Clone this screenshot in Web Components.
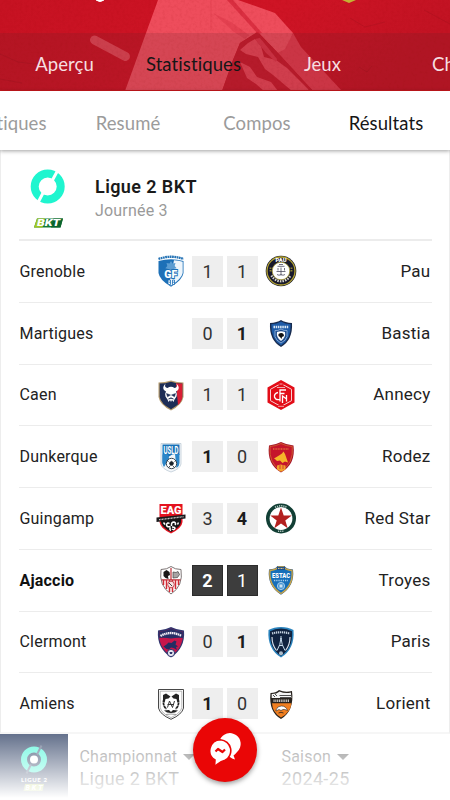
<!DOCTYPE html>
<html lang="fr">
<head>
<meta charset="utf-8">
<meta name="viewport" content="width=device-width, initial-scale=1">
<title>Résultats - Ligue 2 BKT</title>
<style>
    html, body {
        margin: 0;
        height: 100%;
        overflow: hidden;
        background: #fff;
        font-family: Roboto, "Liberation Sans", sans-serif;
    }
</style>
</head>
<body>
<results-screen>
    <club-header slot="header">
        <tab-item light>Aperçu</tab-item>
        <tab-item active>Statistiques</tab-item>
        <tab-item light>Jeux</tab-item>
        <tab-item light>Chat</tab-item>
    </club-header>
    <sub-tabs slot="tabs">
        <tab-item>Statistiques</tab-item>
        <tab-item>Resumé</tab-item>
        <tab-item>Compos</tab-item>
        <tab-item active>Résultats</tab-item>
    </sub-tabs>
    <league-title slot="content" name="Ligue 2 BKT" day="Journée 3"></league-title>
    <match-row slot="content" home="Grenoble" away="Pau" score="1-1"></match-row>
    <match-row slot="content" home="Martigues" away="Bastia" score="0-1"></match-row>
    <match-row slot="content" home="Caen" away="Annecy" score="1-1"></match-row>
    <match-row slot="content" home="Dunkerque" away="Rodez" score="1-0"></match-row>
    <match-row slot="content" home="Guingamp" away="Red Star" score="3-4"></match-row>
    <match-row slot="content" home="Ajaccio" away="Troyes" score="2-1" own></match-row>
    <match-row slot="content" home="Clermont" away="Paris" score="0-1"></match-row>
    <match-row slot="content" home="Amiens" away="Lorient" score="1-0"></match-row>
    <filter-bar slot="footer"></filter-bar>
    <chat-button slot="fab"></chat-button>
</results-screen>

<script>
// Crests, all drawn in a 32x32 box
const CRESTS = {
    'Grenoble': `
        <path d="M3.500 4Q16 -.5 28.500 4" fill="none" stroke="#2573b5" stroke-width="2.300" stroke-dasharray="1.800 .5"/>
        <path d="M3.500 6Q16 2.500 28.500 6V18Q27.500 25 16 31.700Q4.500 25 3.500 18Z" fill="#1d70b7"/>
        <path d="M19 5.200Q24 5.500 27.700 6.800V18Q26.500 24 16 30.500L14 29Z" fill="#eef5fb"/>
        <path d="M16 6l1.500 2.500 3-.5-.8 3 2 2.200-3 .8L16 17l-2.700-3-3-.8 2-2.200-.8-3 3 .5z" fill="#5c9dd2"/>
        <text x="15.700" y="23" font-size="10.500" font-weight="900" fill="#fff" stroke="#1d70b7" stroke-width="1.800" paint-order="stroke" text-anchor="middle">GF</text>
        <path d="M13.500 25h2v4.500h-2M14 27.200h1.500M17.500 25h2v4.500h-2zM17.500 27.200h2" stroke="#1d70b7" fill="#fff" stroke-width=".8"/>`,
    'Pau': `
        <circle cx="16" cy="16" r="15.300" fill="#17182b"/>
        <circle cx="16" cy="16" r="14" fill="none" stroke="#b5a532" stroke-width="1.300"/>
        <path d="M6.500 20.500A10.700 10.700 0 0 0 25.500 20.500" fill="none" stroke="#d8d6cc" stroke-width="2.300" stroke-dasharray="1.500 1.100"/>
        <path d="M5.500 12.500v5M26.500 12.500v5" stroke="#8d8332" stroke-width="1.800" stroke-dasharray="1.500 1"/>
        <circle cx="16" cy="16" r="8.800" fill="#fff" stroke="#a99c36" stroke-width=".8"/>
        <text x="16" y="7" font-size="5" font-weight="900" fill="#fff" textLength="11" lengthAdjust="spacingAndGlyphs" text-anchor="middle">PAU</text>
        <path d="M12.500 11.300h7M14 9.500h4M11.500 16.500h9M13 13v2.500M16 12.500v8M19.500 13v2.500M12 19.500q2 1.500 4 0q2 1.500 4 0" stroke="#4b4b5e" stroke-width=".8" fill="none"/>`,
    'Bastia': `
        <path d="M5 6Q12 5.500 16 3Q20 5.500 27 6Q28 23 16 30Q4 23 5 6Z" fill="#182b4e"/>
        <path d="M6.300 7.300Q12 7 16 4.600Q20 7 25.700 7.300Q26.200 22.300 16 28.600Q5.800 22.300 6.300 7.300Z" fill="#1d5aa6"/>
        <path d="M8.500 10h15" stroke="#d9e7f5" stroke-width="2.400" stroke-dasharray="1.500 .7"/>
        <path d="M10 13.500q3 .5 6-1.500q3 2 6 1.500v6q-1 4-6 6.500q-5-2.500-6-6.500z" fill="#1d4b8c" stroke="#9dbbe0" stroke-width=".8"/>
        <path d="M12 15q4-1.500 8 0q1 5.500-4 9q-5-3.500-4-9z" fill="#fff"/>
        <path d="M13.500 17q3-2 5 0l.5 2-2 1-.5 2-1.500-2-1.500-1z" fill="#111"/>`,
    'Caen': `
        <path d="M3.500 3.500Q10 3.500 16 1.500Q22 3.500 28.500 3.500V18Q27 26 16 31.500Q5 26 3.500 18Z" fill="#b49a6c"/>
        <path d="M4.700 4.600Q10 4.500 16 2.700Q22 4.500 27.300 4.600V18Q26 25 16 30.200Q6 25 4.700 18Z" fill="#1d2d56"/>
        <path d="M21 4.200Q24 4.600 27.300 4.600V18Q26.800 22.500 23 26Z" fill="#d81e34"/>
        <path d="M10.500 4.500Q5.500 10 11 12.500Q9.500 15 10.500 17.500L12.500 20.500L13.500 23L15 21L16 23L17 21L18.500 23L19.500 20.500L21.500 17.500Q22.500 15 21 12.500Q26.500 10 21.500 4.500Q23 8.500 19.500 9Q16 6.500 12.500 9Q9 8.500 10.500 4.500Z" fill="#fff"/>
        <path d="M11.500 14.500l4 1.500-3 1.800zM20.500 14.500l-4 1.500 3 1.800zM13.500 20q2.500-2.500 5 0q-2.500-1-5 0" fill="#1d2d56" stroke="#1d2d56" stroke-width=".5"/>`,
    'Annecy': `
        <path d="M16 1L29.500 8.500V23.500L16 31L2.500 23.500V8.500Z" fill="#e30d18"/>
        <path d="M16 4.500L26.500 10.300V21.700L16 27.500L5.500 21.700V10.300Z" fill="none" stroke="#f7d2d3" stroke-width="1"/>
        <path d="M13.500 3h5v3h-5zM13 26h6v3h-6z" fill="#e30d18"/>
        <path d="M14.500 5h3M12 8.500h8M13 27.300h6" stroke="#f6b8bb" stroke-width=".9"/>
        <path d="M15 22.500V11H21M15 14.500H19.500M13 13.500Q9 14.500 9.500 18Q10.500 21.300 14.500 20.500M17.500 24V17L21.500 20V16V22.500" stroke="#fff" stroke-width="1.300" fill="none"/>`,
    'Dunkerque': `
        <path d="M6 2.500H26V23Q25 28 16 31Q7 28 6 23Z" fill="#f4f7fa" stroke="#b7c5d1" stroke-width=".7"/>
        <path d="M7.500 3.500H24.500V14Q16 10 7.500 23Z" fill="#1872b8"/>
        <path d="M7.500 13.500Q14 11 14 18L9 26Q7.500 24 7.500 21ZM20 13h4.500v9q0 3-3 5z" fill="#2c86c9"/>
        <text x="16" y="12.500" font-size="10" font-weight="700" fill="#fff" textLength="15" lengthAdjust="spacingAndGlyphs" text-anchor="middle">USLD</text>
        <circle cx="16.500" cy="22.500" r="5.200" fill="#fff" stroke="#26343f" stroke-width=".9"/>
        <path d="M16.500 20.300l2 1.500-.8 2.400h-2.400l-.8-2.400zM12 19.500l1.500 1M21 19.500l-1.500 1M14 26.500l.8-1.500M19 26.500l-.8-1.500" fill="#19222a" stroke="#19222a" stroke-width=".8"/>`,
    'Rodez': `
        <path d="M4 4.500Q10 4 16 1Q22 4 28.500 4.500Q31 23 16 31.500Q1.500 23 4 4.500Z" fill="#a5122a"/>
        <path d="M5 5.500Q11 5 16 2.500Q21 5 27.300 5.500Q29 22.500 16 30Q3.500 22.500 5 5.500Z" fill="#c5152b" stroke="#df8a32" stroke-width=".6"/>
        <path d="M8 8h16" stroke="#df6b3a" stroke-width="1.300" stroke-dasharray="1 .6"/>
        <path d="M9 17.500L14 14.500L17 12.500L18.500 10.500L20 13L23 21.500L20 20.500L17.500 22L15 19.500L12 20L10.500 18.500Z" fill="#f6b52a"/>
        <path d="M12 24.500L15.500 23.500L20.500 24.500V28.500L16 30.800L12 28.500Z" fill="#f2a32c"/>
        <path d="M15 24v4M18 24v4" stroke="#c5152b" stroke-width=".7"/>`,
    'Guingamp': `
        <path d="M4.500 2H27.500V20Q27 26 16 31.500Q5 26 4.500 20Z" fill="#e4121f"/>
        <path d="M6 15H26V20Q25.500 25 16 30Q6.500 25 6 20Z" fill="#171517"/>
        <text x="16" y="12.300" font-size="11" font-weight="900" fill="#fff" textLength="21" lengthAdjust="spacingAndGlyphs" text-anchor="middle">EAG</text>
        <path d="M1.500 15.500L30.500 12.500V16.500L1.500 20Z" fill="#1b181a"/>
        <path d="M4 17.700L28.500 14.700" stroke="#c9c9c9" stroke-width="1.300" stroke-dasharray="1 .5"/>
        <path d="M15.500 24.500q-4 1-4-2q1-2.500 3-1M16.500 24q-.5-4 2.500-4q2.500 1 1 3M17 25q3 0 3 1.500q-1 2-3 .5M15.500 25.500q-1.500 2 .5 3M8.500 20.500l1.500 2M23.500 20.500l-1 2" fill="none" stroke="#fff" stroke-width="1.500"/>`,
    'Red Star': `
        <circle cx="16" cy="16.500" r="15" fill="#123f35"/>
        <path d="M10 5.300A12.900 12.900 0 0 1 22 5.300M13 29.200h6" fill="none" stroke="#b3c6c0" stroke-width="1.600" stroke-dasharray="1.200 .9"/>
        <circle cx="16" cy="16.500" r="11.400" fill="#fff"/>
        <path d="M16 5.500L18.700 13.500H26.800L20.300 18.400L22.700 26.200L16 21.500L9.300 26.200L11.700 18.400L5.200 13.500H13.300Z" fill="#b3201f"/>`,
    'Ajaccio': `
        <path d="M6 5.500Q12 5.500 16 2.500Q20 5.500 26 5.500Q28.500 22 16 30Q3.500 22 6 5.500Z" fill="#fff" stroke="#6f6767" stroke-width=".9"/>
        <path d="M8.500 16v5M11.500 16v9M14.500 16v12M17.500 16v12M20.500 16v9M23.500 16v5" stroke="#d22b34" stroke-width="1.500"/>
        <path d="M6.500 15.800H25.500M16 4V16" stroke="#bf3038" stroke-width="1.200"/>
        <path d="M8.500 8l3-2 3 2 .5 3-2 1 .5 3-3-1-2-2z" fill="#191717"/>
        <path d="M18 8l3 .5 2-1 1.500 3-2 3-4.500 .5z" fill="#a8a4a4" stroke="#444" stroke-width=".7"/>
        <circle cx="16" cy="20.500" r="3.300" fill="#f9e4e4" stroke="#b72a35" stroke-width=".8"/><path d="M14 19l3 3" stroke="#444"/>`,
    'Troyes': `
        <path d="M4 5.500Q11 5 12.500 2H19.500Q21 5 28 5.500Q30 22 16 30.700Q2 22 4 5.500Z" fill="#1d4c86"/>
        <path d="M5 6.500Q11 6 13.500 3H18.500Q21 6 27 6.500Q28.700 21.500 16 29.500Q3.300 21.500 5 6.500Z" fill="#176fb9" stroke="#c9a548" stroke-width="1.400"/>
        <path d="M12 4.500h8" stroke="#1d4c86" stroke-width="2.800"/>
        <path d="M13 4.500h6" stroke="#d5c28b" stroke-width="1" stroke-dasharray="1 .5"/>
        <text x="16" y="13.500" font-size="6.500" font-weight="900" fill="#fff" textLength="18" text-anchor="middle" lengthAdjust="spacingAndGlyphs">ESTAC</text>
        <path d="M9 16.500h14" stroke="#a7cde9" stroke-width="1.500" stroke-dasharray="1.300 .9"/>
        <circle cx="16" cy="22" r="3.600" fill="#4895d1" stroke="#b4d5ee" stroke-width=".9"/>
        <path d="M14.500 20.500h3v3h-3z" fill="#cfe4f4"/>`,
    'Clermont': `
        <path d="M3 4.500Q10 4 16 1Q22 4 29 4.500Q30.500 22 16 31.500Q1.500 22 3 4.500Z" fill="#30366f"/>
        <path d="M4.200 5.500Q11 5 16 2.500Q21 5 27.800 5.500Q29 21.500 16 30Q3 21.500 4.200 5.500Z" fill="#c6164b"/>
        <path d="M4.200 5.500Q11 5 16 2.500Q21 5 27.800 5.500L27.900 12Q22 11.500 16 12.500Q10 11.500 4.200 12Z" fill="#272f66"/>
        <path d="M5.500 10Q16 4 26.500 10" fill="none" stroke="#f3eef5" stroke-width="2.300" stroke-dasharray="1.500 .5"/>
        <path d="M8.500 20.500l3-2 2-2 3 .5 3-2.500 2 1-1 3 2.500 2-2 .5 1 3-3.500-2-2.500-.5-2 2-2.500-.5z" fill="#222d63"/>
        <circle cx="16" cy="27" r="3.600" fill="#e8e8ef" stroke="#30366f"/><path d="M14.500 26h3l-.5 2h-2z" fill="#30366f"/>`,
    'Paris': `
        <path d="M3.500 4Q9 1 16 1Q23 1 28.500 4Q30 23 16 31.500Q2 23 3.500 4Z" fill="#2a83bd"/>
        <path d="M5 5.200Q10 2.500 16 2.500Q22 2.500 27 5.200Q28.200 22 16 29.800Q3.800 22 5 5.200Z" fill="#10223f"/>
        <path d="M7 7.500Q16 5 25 7.500" fill="none" stroke="#c3d0de" stroke-width="2.200" stroke-dasharray="1.300 .7"/>
        <path d="M7 11Q7 19 11.500 24.500M25 11Q25 19 20.500 24.500" fill="none" stroke="#dbe5f0" stroke-width="1.100"/>
        <path d="M16 10V13M16 12Q15.500 19 12 24.500M16 12Q16.500 19 20 24.500M14 19.500h4" fill="none" stroke="#c8dced" stroke-width="1"/>
        <circle cx="16" cy="27.300" r="2" fill="#aebcc9"/>`,
    'Amiens': `
        <path d="M3.500 1.500H28.500V20Q27 26.500 16 31.300Q5 26.500 3.500 20Z" fill="#fff" stroke="#333" stroke-width=".9"/>
        <path d="M5.200 3.200H26.800V19.500Q25.500 25.500 16 29.600Q6.500 25.500 5.200 19.500Z" fill="none" stroke="#777" stroke-width=".5"/>
        <path d="M8 7l3-1.500 3 2 1.500 1-2 2-3 .5-1 4-1.500-4zM24 7l-3-1.500-3 2-1.500 1 2 2 3 .5 1 4 1.500-4z" fill="#242424"/>
        <path d="M9 11q-2 6 2.500 10M23 11q2 6-2.500 10" stroke="#222" stroke-width="1.700" stroke-dasharray="3 .5" fill="none"/>
        <path d="M12.500 19.500L14.500 13L17.500 19.500L19.500 13M12.500 16.500l6.500 0" stroke="#333" stroke-width="1" fill="none"/>
        <path d="M9 22.500l5-.5 2 2 2-2 5 .5-3 2-4 .5-4-.5z" fill="#222"/>
        <path d="M11 26.500Q16 25.500 21 26.500" fill="none" stroke="#999"/>`,
    'Lorient': `
        <path d="M5.500 5Q11 5 14 2Q20 5 27 3Q29.500 23 16 31Q3.500 24 5.500 5Z" fill="#27221d"/>
        <path d="M6.700 6Q12 6 14.500 3.500Q20 6 25.900 4.500L26.400 10H6.700Z" fill="#f4f4f4"/>
        <path d="M8 7l2 2M10 6l2 2M14.500 7.500H26M15 9.500h11" stroke="#222" stroke-width=".8"/>
        <path d="M7 15.200H26.500Q25.500 24.500 16 29.500Q7.500 24.500 7 15.200Z" fill="#f07f21"/>
        <path d="M8.500 12.800h15.500" stroke="#c9c6c2" stroke-width="2.400" stroke-dasharray="1.100 .7"/>
        <path d="M11 22q1-4 5.500-4q4.500 0 6 4.500q-3-1.500-4.500-1l-2 1-2-1-3 1.500z" fill="#fff" stroke="#27221d" stroke-width=".6"/>
        <path d="M13.500 25q2.500-1.500 5 0" stroke="#27221d" stroke-width=".8" fill="none"/>`
};

class ResultsScreen extends HTMLElement {
    constructor() {
        super();
        this.attachShadow({ mode: 'open' }).innerHTML = `
            <style>
                :host {
                    display: flex;
                    flex-direction: column;
                    position: relative;
                    width: 450px;
                    height: 800px;
                    overflow: hidden;
                    background: #fff;
                }
                .card {
                    flex: none;
                    box-sizing: border-box;
                    height: 584px;
                    padding: 0 17.500px;
                    border: 1px solid #ededed;
                    border-top: 0;
                    border-bottom: 2px solid #f6f6f6;
                    overflow: hidden;
                }
            </style>
            <slot name="header"></slot>
            <slot name="tabs"></slot>
            <main class="card"><slot name="content"></slot></main>
            <slot name="footer"></slot>
            <slot name="fab"></slot>
        `;
    }
}

class TabItem extends HTMLElement {
    constructor() {
        super();
        this.attachShadow({ mode: 'open' }).innerHTML = `
            <style>
                :host {
                    flex: none;
                    width: 129px;
                    text-align: center;
                    font: 18.500px/24px Lato, "Open Sans", sans-serif;
                    font-variant-ligatures: none;
                    letter-spacing: .1px;
                    color: #9b9b9b;
                }
                :host([light]) { color: #f6dfe1; }
                :host([active]) { color: #161616; }
            </style>
            <slot></slot>
        `;
    }
}

class ClubHeader extends HTMLElement {
    constructor() {
        super();
        this.attachShadow({ mode: 'open' }).innerHTML = `
            <style>
                :host {
                    display: grid;
                    flex: none;
                    height: 91px;
                    overflow: hidden;
                    background: #c71424;
                }
                svg, nav { grid-area: 1 / 1; }
                svg { display: block; }
                nav {
                    display: flex;
                    align-items: center;
                    align-self: end;
                    box-sizing: border-box;
                    width: 450px;
                    height: 58px;
                    padding-top: 4px;
                    overflow: hidden;
                    background: rgba(85, 40, 45, .16);
                    border-bottom: 1px solid #c9171c;
                }
            </style>
            <svg width="450" height="91" viewBox="0 0 450 91" aria-hidden="true">
                <defs>
                    <linearGradient id="wall" x2="1" y2=".2">
                        <stop offset="0" stop-color="#c61222"/>
                        <stop offset=".6" stop-color="#cf1425"/>
                        <stop offset="1" stop-color="#c21323"/>
                    </linearGradient>
                    <filter id="grain" x="0" y="0" width="1" height="1">
                        <feTurbulence type="fractalNoise" baseFrequency=".35" numOctaves="3" seed="4"/>
                        <feColorMatrix values="0 0 0 0 .25  0 0 0 0 0  0 0 0 0 0  0 0 0 1.200 -.52"/>
                    </filter>
                </defs>
                <rect width="450" height="91" fill="url(#wall)"/>
                <path d="M158 0H238L275 13L293 33L287 50L278 53L258 32L240 43L233 60L222 91H125Z" fill="#ee4d5c"/>
                <path d="M293 33L301 47L342 91H313L278 53L285 49Z" fill="#e2394b"/>
                <path d="M257 32L278 53L313 91H222L233 60L240 43Z" fill="#c81a2b"/>
                <path d="M240 50L248 43L255 39L261 46L264 57L276 60L287 68L308 89L309 91H292L273 75L265 69L258 57L246 54Z" fill="#e74354"/>
                <path d="M240 62L250 67L257 77L271 82L278 91H264L256 84L247 78Z" fill="#e74354"/>
                <path d="M255 39L260 38L277 59L276 62L266 53Z" fill="#dd3346"/>
                <path d="M227 0H233L262 33L258 34Z" fill="#d32638" opacity=".75"/>
                <path d="M213 13L231 22L249 35L245 39L234 32Z" fill="#e03c4d" opacity=".7"/>
                <path d="M211 0v30" stroke="#dd3b4b" opacity=".5"/>
                <path d="M94.500 40L125.500 56.500" stroke="#e24453" stroke-width="9" stroke-linecap="round"/>
                <path d="M0 54l18 8 16 2 18-4 12 7M0 79l22 4M350 18l15 9 20-5M359 67l8 5 5-6M424 10l26 14" fill="none" stroke="#90101b" stroke-width=".8" opacity=".3"/>
                <rect width="450" height="91" filter="url(#grain)" opacity=".15"/>
                <path d="M96 0q4 3 8 0" fill="#fff" stroke="#fff"/>
                <path d="M342 0h14l-7 3z" fill="#c4b334"/>
            </svg>
            <nav><slot></slot></nav>
        `;
    }
}

class SubTabs extends HTMLElement {
    constructor() {
        super();
        this.attachShadow({ mode: 'open' }).innerHTML = `
            <style>
                :host {
                    display: flex;
                    flex: none;
                    align-items: center;
                    box-sizing: border-box;
                    height: 59px;
                    padding-top: 4px;
                    background: #fff;
                    box-shadow: 0 1px 4px rgba(0, 0, 0, .38);
                    z-index: 1;
                }
                nav { display: flex; margin-left: -65.500px; }
            </style>
            <nav><slot></slot></nav>
        `;
    }
}

class LeagueTitle extends HTMLElement {
    connectedCallback() {
        this.attachShadow({ mode: 'open' }).innerHTML = `
            <style>
                :host {
                    display: flex;
                    box-sizing: border-box;
                    height: 91px;
                    border-bottom: 2px solid #ececec;
                }
                svg { flex: none; margin: 17px 18px 0 10.500px; }
                .text { padding-top: 25px; }
                h1 {
                    margin: 0;
                    font-size: 18px;
                    line-height: 24px;
                    font-weight: 600;
                    color: #1a1a1a;
                    letter-spacing: .4px;
                }
                p {
                    margin: 0;
                    font-size: 16px;
                    line-height: 24px;
                    color: #9a9a9a;
                    letter-spacing: .2px;
                }
            </style>
            <svg width="48" height="64" viewBox="0 0 48 64">
                <circle cx="18.700" cy="19.500" r="13" fill="none" stroke="#1ff5cf" stroke-width="8"/>
                <path d="M8.500 36.500L14 26M23.500 13L29.500 2" stroke="#fff" stroke-width="3"/>
                <path d="M8 51.500H34L31.500 60.500H5Z" fill="#157a36"/>
                <path d="M8 51.500H16L13.500 60.500H5Z" fill="#a3c820"/>
                <path d="M24.500 51.500H34L31.500 60.500H22Z" fill="#0c642d"/>
                <text x="19.500" y="59.300" font-size="9.500" font-weight="900" font-style="italic" fill="#fff" textLength="23" lengthAdjust="spacingAndGlyphs" text-anchor="middle">BKT</text>
            </svg>
            <div class="text">
                <h1>${this.getAttribute('name')}</h1>
                <p>${this.getAttribute('day')}</p>
            </div>
        `;
    }
}

class TeamCrest extends HTMLElement {
    connectedCallback() {
        const crest = CRESTS[this.getAttribute('team')];
        this.attachShadow({ mode: 'open' }).innerHTML = `
            <style>
                :host { display: block; width: 32px; height: 32px; }
                svg { display: block; font-family: Roboto, sans-serif; letter-spacing: 0; }
            </style>
            ${crest ? `<svg width="32" height="32" viewBox="0 0 32 32">${crest}</svg>` : ''}
        `;
    }
}

class MatchRow extends HTMLElement {
    connectedCallback() {
        const home = this.getAttribute('home');
        const away = this.getAttribute('away');
        const [a, b] = this.getAttribute('score').split('-');

        this.attachShadow({ mode: 'open' }).innerHTML = `
            <style>
                :host {
                    display: grid;
                    grid-template-columns: 135px 32px 31px 31px 32px 1fr;
                    align-items: center;
                    box-sizing: border-box;
                    height: 61.750px;
                    padding: 0 1px;
                    border-bottom: 1px solid #ececec;
                    font-size: 16px;
                    letter-spacing: .2px;
                    color: #222;
                }
                .away {
                    padding-bottom: 1px;
                    text-align: right;
                    font-size: 17px;
                    letter-spacing: .25px;
                }
                .score {
                    height: 31px;
                    line-height: 31px;
                    text-align: center;
                    font-size: 18px;
                    letter-spacing: 0;
                    background: #eee;
                    color: #333;
                }
                .first { margin: 0 -5.500px 0 5.500px; }
                .second { margin: 0 -9px 0 9px; }
                .win { font-weight: 700; color: #1c1c1c; }
                .right { margin-left: 16.500px; }
                :host([own]) .home { font-weight: 700; color: #111; }
                :host([own]) .score { background: #3d3d3d; color: #fff; outline: 1px solid #2c2c2c; outline-offset: -1px; }
            </style>
            <span class="home">${home}</span>
            <team-crest class="left" team="${home}"></team-crest>
            <span class="score first ${a > b ? 'win' : ''}">${a}</span>
            <span class="score second ${b > a ? 'win' : ''}">${b}</span>
            <team-crest class="right" team="${away}"></team-crest>
            <span class="away">${away}</span>
        `;
    }
}

class FilterBar extends HTMLElement {
    constructor() {
        super();
        this.attachShadow({ mode: 'open' }).innerHTML = `
            <style>
                :host {
                    display: flex;
                    position: relative;
                    flex: none;
                    height: 66px;
                    background: #fff;
                    overflow: hidden;
                }
                /* whitens the bar towards the bottom edge */
                :host::after {
                    content: "";
                    position: absolute;
                    inset: 0;
                    background: linear-gradient(rgba(255, 255, 255, .39), #fff 97%);
                }
                .logo { flex: none; width: 67.500px; background: #021743; }
                .logo svg { display: block; }
                .field {
                    flex: none;
                    box-sizing: border-box;
                    width: 202px;
                    padding: 12px 0 0 12px;
                }
                .label {
                    display: flex;
                    align-items: center;
                    gap: 6px;
                    font-size: 16px;
                    line-height: 21px;
                    letter-spacing: .2px;
                    color: #6c6c6c;
                }
                .label::after {
                    content: "";
                    border: 6px solid transparent;
                    border-top-color: #555;
                    border-bottom: 0;
                }
                .value {
                    font-size: 18px;
                    line-height: 23px;
                    letter-spacing: .35px;
                    color: #222;
                }
            </style>
            <div class="logo">
                <svg width="67" height="66" viewBox="0 0 67 66">
                    <circle cx="34" cy="25.500" r="10" fill="none" stroke="#1ff5cf" stroke-width="6"/>
                    <circle cx="34" cy="25.500" r="4" fill="#fff"/>
                    <path d="M26.500 39.500L31 30.500M37 20.500L41.500 11.500" stroke="#33456a" stroke-width="2"/>
                    <text x="34" y="48" font-family="Lato, sans-serif" font-size="6" font-weight="900" fill="#fff" textLength="26" text-anchor="middle">LIGUE 2</text>
                    <path d="M25 50H44L42.500 57H23.500Z" fill="#8fb51b"/>
                    <text x="34" y="56" font-size="7" font-weight="900" font-style="italic" fill="#fff" textLength="17" text-anchor="middle">BKT</text>
                </svg>
            </div>
            <div class="field">
                <div class="label">Championnat</div>
                <div class="value">Ligue 2 BKT</div>
            </div>
            <div class="field">
                <div class="label">Saison</div>
                <div class="value">2024-25</div>
            </div>
        `;
    }
}

class ChatButton extends HTMLElement {
    constructor() {
        super();
        this.attachShadow({ mode: 'open' }).innerHTML = `
            <style>
                :host {
                    position: absolute;
                    left: 193px;
                    top: 718px;
                    width: 64px;
                    height: 64px;
                    border-radius: 50%;
                    background: #ea0606;
                    box-shadow: 0 2px 5px rgba(0, 0, 0, .4);
                    z-index: 2;
                }
                svg { display: block; }
            </style>
            <svg width="64" height="64" viewBox="0 0 64 64">
                <path d="M27 21.500A10.800 10.800 0 1 1 44.500 33.500Q42 36.500 40.500 37.500L42 41.500Q37 40 35.500 37Z" fill="#fff"/>
                <path d="M27.500 21.700A11.200 11 0 0 1 32 42.300Q27.500 43.500 21.500 48.500L22 42A11.200 11 0 0 1 27.500 21.700Z" fill="#fff" stroke="#ea0606" stroke-width="1.600"/>
                <path d="M22.500 33.500L25 31L29.500 34L32 31.500" fill="none" stroke="#ea0606" stroke-width="2.200" stroke-linejoin="round"/>
            </svg>
        `;
    }
}

customElements.define('team-crest', TeamCrest);
customElements.define('tab-item', TabItem);
customElements.define('club-header', ClubHeader);
customElements.define('sub-tabs', SubTabs);
customElements.define('league-title', LeagueTitle);
customElements.define('match-row', MatchRow);
customElements.define('filter-bar', FilterBar);
customElements.define('chat-button', ChatButton);
customElements.define('results-screen', ResultsScreen);
</script>
</body>
</html>
